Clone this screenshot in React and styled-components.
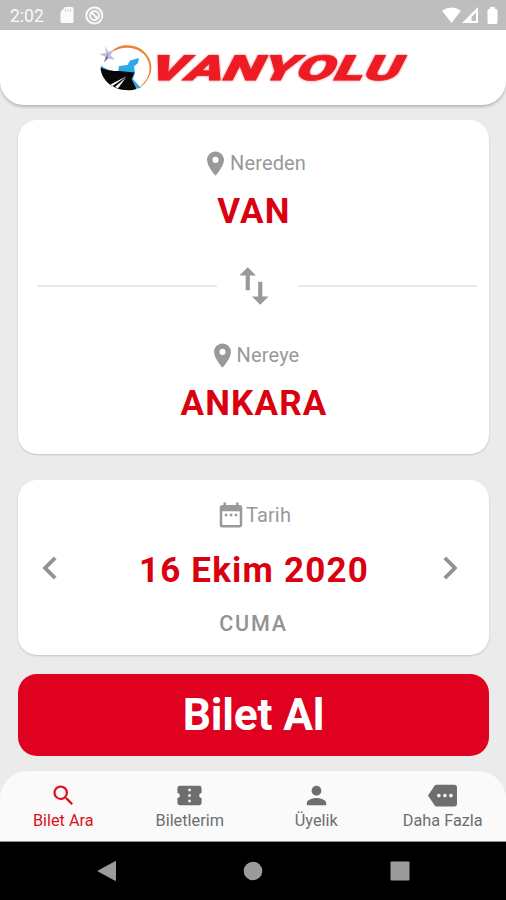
import React from "react";
import styled, { createGlobalStyle } from "styled-components";
import {
  MdChevronLeft,
  MdChevronRight,
  MdConfirmationNumber,
  MdDateRange,
  MdImportExport,
  MdLocationOn,
  MdMore,
  MdPerson,
  MdSearch
} from "react-icons/md";

const GlobalStyle = createGlobalStyle`
  * {
    box-sizing: border-box;
  }
  body {
    margin: 0;
    background: #ebebeb;
    font-family: Roboto, "Liberation Sans", sans-serif;
  }
`;

const Screen = styled.div`
  display: flex;
  flex-direction: column;
  width: 506px;
  height: 900px;
  overflow: hidden;
  background: #ebebeb;
`;

const StatusBar = styled.div`
  display: flex;
  align-items: center;
  flex: none;
  height: 30px;
  padding: 0 7px 0 10px;
  background: #bebebe;
  color: #fafafa;
`;
const Clock = styled.span`
  width: 50px;
  font-size: 17.5px;
  line-height: 30px;
  padding-top: 2px;
`;
const StatusIcons = styled.div`
  display: flex;
  align-items: center;
  gap: ${props => props.$gap};
  margin-left: ${props => (props.$right ? "auto" : "0")};

  svg {
    display: block;
  }
`;

const Header = styled.header`
  display: flex;
  flex: none;
  height: 75px;
  padding: 12px 0 0 99px;
  background: #fff;
  border-radius: 0 0 24px 24px;
  box-shadow: 0 2px 3px rgba(0, 0, 0, 0.22);
`;

const Content = styled.main`
  display: flex;
  flex-direction: column;
  flex: 1;
  padding: 15px 17px 0 18px;
`;
const Card = styled.section`
  display: flex;
  flex-direction: column;
  flex: none;
  height: ${props => props.$height}px;
  margin-bottom: ${props => props.$gap}px;
  padding-top: ${props => props.$top}px;
  background: #fff;
  border-radius: 19px;
  box-shadow: 0 1px 2px rgba(0, 0, 0, 0.17);
`;
const Place = styled.div`
  display: flex;
  flex-direction: column;
  align-items: center;
  gap: 13px;
`;
const Caption = styled.div`
  display: flex;
  align-items: center;
  justify-content: center;
  height: 30px;
  font-size: 20px;
  letter-spacing: 0.15px;
  color: #999;

  svg {
    display: block;
    flex: none;
  }
`;
const Value = styled.div`
  padding-left: 1px;
  font-size: 35px;
  line-height: 42px;
  font-weight: 700;
  letter-spacing: 1.2px;
  color: #d9000f;
`;
const SwapRow = styled.div`
  display: flex;
  align-items: center;
  height: 50px;
  padding: 0 12px 0 19px;
  margin: 28px 0 29px;
  color: #999;
`;
const Line = styled.div`
  flex: 1;
  height: 2px;
  background: #e9e9e9;
`;
const SwapButton = styled.div`
  display: flex;
  justify-content: center;
  width: 81px;
  padding-right: 7px;
`;
const DateRow = styled.div`
  display: flex;
  align-items: center;
  justify-content: space-between;
  height: 46px;
  margin-top: 15px;
  padding: 0 16px 0 9px;
  color: #939393;

  ${Value} {
    padding: 6px 0 0 8px;
  }
`;
const Day = styled.div`
  margin-top: 19px;
  text-align: center;
  font-size: 21.5px;
  line-height: 28px;
  font-weight: 500;
  letter-spacing: 1.8px;
  color: #939393;
`;
const BuyButton = styled.button`
  flex: none;
  height: 82px;
  padding: 0;
  border: none;
  border-radius: 19px;
  background: #e00020;
  color: #fff;
  font-family: inherit;
  font-size: 44.3px;
  font-weight: 700;
  letter-spacing: -0.2px;
`;

const TabBar = styled.nav`
  display: flex;
  flex: none;
  height: 71px;
  background: #fafafa;
  border-radius: 28px 28px 0 0;
  border-bottom: 1px solid #8d8d8d;
`;
const Tab = styled.div`
  display: flex;
  flex-direction: column;
  align-items: center;
  flex: 1;
  padding-top: 9px;
  font-size: 16.3px;
  line-height: 22px;
  color: ${props => (props.$active ? "#dc1020" : "#6e6e6e")};
`;
const TabIcon = styled.div`
  display: flex;
  align-items: center;
  justify-content: center;
  height: 30px;
`;
const SystemBar = styled.div`
  display: flex;
  align-items: center;
  justify-content: center;
  flex: none;
  height: 58px;
  gap: 126.5px;
  background: #000;

  svg {
    display: block;
  }
`;

const Emblem = () => (
  <svg width="54" height="52" viewBox="99 42 54 52">
    <path d="M110 53 C116 45 127 43.500 137 47 C149 52 155 66 149 77 C146.500 82 143 86 138 88 C147 82 151 73 149 64 C146 49 127 42 110 53Z" fill="#e8843c" />
    <path d="M118 73 L119 66 L127.500 65 L130 60.500 L139 58 L138 63 L134 66.500 L135 73 L133 79 L141 88 L133 89 L128 76Z" fill="#2fa8e6" />
    <path d="M101 65.500 C105 68.500 108 70 113 70.500 L112 73 L101 70Z" fill="#2fa8e6" />
    <path d="M100.500 67.500 C107 70.500 112 71 119 71 L134.500 72.500 L131.500 79 L136.500 89 C131 91 122 90.500 116 88 C107 84 101 77 100.500 67.500Z" fill="#070707" />
    <path d="M127 76 L110.500 84.500 L112.500 86Z" fill="#fff" />
    <path d="M126 77.500 L115 87 L118 88.300Z" fill="#fff" />
    <path d="M105 46 L108.500 52 L115 49 L110.500 55 L115 60 L108.500 58 L104 63 L105.500 57 L99.500 54 L106 53Z" fill="#c3bcdc" />
    <path d="M109 53 L107 57 L113 60 L108 58 L104 62 L106.500 56Z" fill="#6d6097" />
  </svg>
);

const WordMarkSvg = styled.svg`
  overflow: visible;
  filter: drop-shadow(0 0 1px #f3959b) drop-shadow(0 0 0.5px #f6b3b7);
`;
const Letters = styled.text`
  font-family: Roboto, sans-serif;
  font-size: 34.5px;
  font-weight: 900;
  font-kerning: none;
  fill: #ed1c24;
  stroke: #ed1c24;
  stroke-width: 0.8px;
`;

// the word mark is slanted, with a pale red rim round the letters
const WordMark = () => (
  <WordMarkSvg width="262" height="52" viewBox="153 42 262 52">
    <g transform="translate(155 80) skewX(-27)">
      <Letters x="-9" y="0" textLength="251" lengthAdjust="spacingAndGlyphs">
        VANYOLU
      </Letters>
    </g>
  </WordMarkSvg>
);

const tabs = [
  { label: "Bilet Ara", icon: <MdSearch size={27} />, active: true },
  { label: "Biletlerim", icon: <MdConfirmationNumber size={29} /> },
  { label: "Üyelik", icon: <MdPerson size={29} /> },
  { label: "Daha Fazla", icon: <MdMore size={29} /> }
];

class App extends React.Component {
  render() {
    return (
      <Screen>
        <GlobalStyle />
        <StatusBar>
          <Clock>2:02</Clock>
          <StatusIcons $gap="11px">
            <svg width="14" height="16" viewBox="0 0 14 16">
              <path d="M5 0h7q1.500 0 1.500 1.500v13q0 1.500-1.500 1.500H2q-1.500 0-1.500-1.500V5z" fill="#fafafa" />
              <path d="M5.500 2v2.500M8 2v2.500M10.500 2v2.500" stroke="#cfcfcf" strokeWidth="1" />
            </svg>
            <svg width="19" height="19" viewBox="0 0 19 19" fill="none" stroke="#fafafa">
              <path d="M13 16.600A8 8 0 1 1 16.500 13" strokeWidth="2" />
              <circle cx="9.500" cy="9.500" r="4.500" strokeWidth="1.800" />
              <path d="M6.500 6.500l6 6M13 17l3.500-3.500" strokeWidth="1.800" />
            </svg>
          </StatusIcons>
          <StatusIcons $gap="1px" $right>
            <svg width="19" height="16" viewBox="0 0 19 16">
              <path d="M0 3.800Q9.500-3 19 3.800L9.500 16z" fill="#fff" />
            </svg>
            <svg width="17" height="16" viewBox="0 0 17 16">
              <path d="M16 0V16H0z" fill="#fff" />
              <path d="M14 5.500V14H9.500V9.800z" fill="#bebebe" />
            </svg>
            <svg width="19" height="17" viewBox="0 0 19 17">
              <path d="M10 0h5v2h1q1.500 0 1.500 1.500v12q0 1.500-1.500 1.500h-7q-1.500 0-1.500-1.500v-12Q7.500 2 9 2h1z" fill="#fff" />
            </svg>
          </StatusIcons>
        </StatusBar>

        <Header>
          <Emblem />
          <WordMark />
        </Header>

        <Content>
          <Card $height={334} $gap={26} $top={28}>
            <Place>
              <Caption>
                <MdLocationOn size={29} />
                Nereden
              </Caption>
              <Value>VAN</Value>
            </Place>
            <SwapRow>
              <Line />
              <SwapButton>
                <MdImportExport size={50} />
              </SwapButton>
              <Line />
            </SwapRow>
            <Place>
              <Caption>
                <MdLocationOn size={29} />
                Nereye
              </Caption>
              <Value>ANKARA</Value>
            </Place>
          </Card>

          <Card $height={175} $gap={19} $top={20}>
            <Caption>
              <MdDateRange size={30} />
              Tarih
            </Caption>
            <DateRow>
              <MdChevronLeft size={46} />
              <Value>16 Ekim 2020</Value>
              <MdChevronRight size={46} />
            </DateRow>
            <Day>CUMA</Day>
          </Card>

          <BuyButton>Bilet Al</BuyButton>
        </Content>

        <TabBar>
          {tabs.map(tab => (
            <Tab key={tab.label} $active={tab.active}>
              <TabIcon>{tab.icon}</TabIcon>
              {tab.label}
            </Tab>
          ))}
        </TabBar>

        <SystemBar>
          <svg width="20" height="20" viewBox="0 0 20 20">
            <path d="M18.500 0.500V19.500L1 10z" fill="#9b9b9b" stroke="#9b9b9b" strokeLinejoin="round" />
          </svg>
          <svg width="20" height="20" viewBox="0 0 20 20">
            <circle cx="10" cy="10" r="9.300" fill="#9b9b9b" />
          </svg>
          <svg width="20" height="20" viewBox="0 0 20 20">
            <rect x="0.500" y="0.500" width="19" height="19" rx="1" fill="#9b9b9b" />
          </svg>
        </SystemBar>
      </Screen>
    );
  }
}

export default App;
